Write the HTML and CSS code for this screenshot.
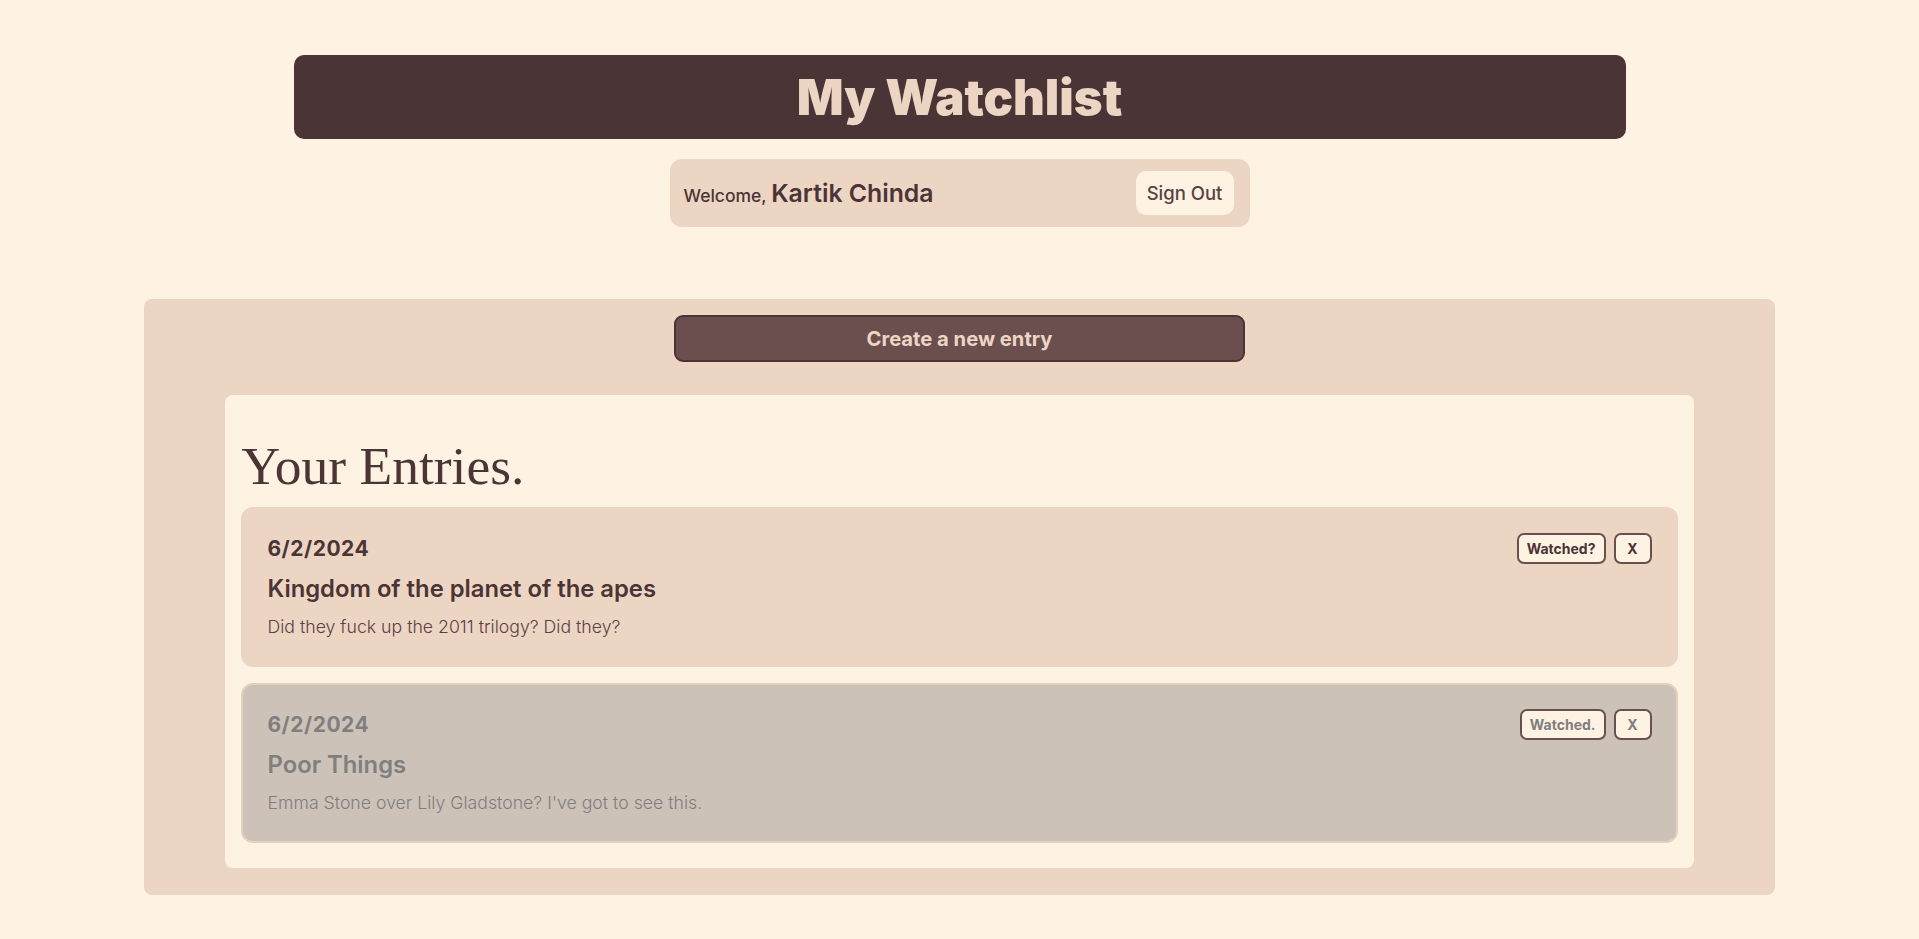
FILE: index.html
```html
<!DOCTYPE html>
<html lang="en">
<head>
<meta charset="utf-8">
<title>My Watchlist</title>
<link rel="stylesheet" href="styles.css">
</head>
<body>
  <header class="top">
    <div class="title-bar"><h1 class="title">My Watchlist</h1></div>
    <div class="welcome-bar">
      <p class="welcome"><span class="welcome-label">Welcome,</span> <span class="welcome-name">Kartik Chinda</span></p>
      <button class="sign-out">Sign Out</button>
    </div>
  </header>
  <main class="panel">
    <button class="create-btn">Create a new entry</button>
    <section class="entries">
      <h2 class="entries-heading">Your Entries.</h2>
      <div class="entry-list">
        <article class="entry">
          <div class="entry-row">
            <span class="entry-date">6/2/2024</span>
            <div class="entry-actions">
              <button class="pill">Watched?</button>
              <button class="pill pill-x">X</button>
            </div>
          </div>
          <h3 class="entry-title">Kingdom of the planet of the apes</h3>
          <p class="entry-desc">Did they fuck up the 2011 trilogy? Did they?</p>
        </article>
        <article class="entry entry-watched">
          <div class="entry-row">
            <span class="entry-date">6/2/2024</span>
            <div class="entry-actions">
              <button class="pill">Watched.</button>
              <button class="pill pill-x">X</button>
            </div>
          </div>
          <h3 class="entry-title">Poor Things</h3>
          <p class="entry-desc">Emma Stone over Lily Gladstone? I've got to see this.</p>
        </article>
      </div>
    </section>
  </main>
</body>
</html>
```
FILE: styles.css
```css
* { box-sizing: border-box; }

html, body {
  margin: 0;
  padding: 0;
}

body {
  background: #fef2e3;
  font-family: Inter, "Noto Sans", sans-serif;
  color: #4a3435;
  padding: 55px 0 40px;
}

.top {
  display: flex;
  flex-direction: column;
  align-items: center;
}

.title-bar {
  width: 1332px;
  height: 84px;
  background: #4a3435;
  border-radius: 10px;
  display: flex;
  align-items: center;
  justify-content: center;
}

.title {
  margin: 0;
  font-family: Inter, sans-serif;
  font-weight: 900;
  font-size: 49px;
  line-height: 1;
  color: #edd5c4;
}

.welcome-bar {
  margin-top: 20px;
  width: 580px;
  height: 68px;
  background: #edd5c4;
  border-radius: 12px;
  padding: 12px 16px 12px 14px;
  display: flex;
  align-items: center;
  justify-content: space-between;
}

.welcome {
  margin: 0;
  color: #4a3435;
}

.welcome-label {
  font-size: 17.5px;
  font-weight: 500;
}

.welcome-name {
  font-size: 24.8px;
  font-weight: 600;
}

.sign-out {
  width: 98px;
  height: 44px;
  border: none;
  border-radius: 10px;
  background: #fef2e3;
  color: #5a4142;
  font-family: Inter, sans-serif;
  font-size: 18.5px;
  font-weight: 500;
  padding: 0;
}

.panel {
  width: 85vw;
  margin: 72px auto 0;
  background: #edd5c4;
  border-radius: 8px;
  padding: 16px 0 27px;
}

.create-btn {
  display: block;
  width: 35%;
  height: 47px;
  margin: 0 auto;
  background: #6b4f4f;
  border: 2px solid #4a3435;
  border-radius: 9px;
  color: #edd5c4;
  font-family: Inter, sans-serif;
  font-weight: 700;
  font-size: 20.2px;
}

.entries {
  width: 90%;
  margin: 33px auto 0;
  background: #fef2e3;
  border-radius: 8px;
  padding: 40px 16px 25px;
}

.entries-heading {
  margin: 0 0 10px 0;
  font-family: "Liberation Serif", "DejaVu Serif", serif;
  font-weight: 400;
  font-size: 53.5px;
  line-height: 62px;
  color: #4a3435;
}

.entry-list {
  display: flex;
  flex-direction: column;
  gap: 16px;
}

.entry {
  background: #edd5c4;
  border-radius: 12px;
  padding: 26px 26px 28px 26px;
}

.entry-row {
  display: flex;
  align-items: center;
  justify-content: space-between;
  height: 31px;
}

.entry-date {
  font-size: 21px;
  font-weight: 700;
  letter-spacing: 0.5px;
}

.entry-actions {
  display: flex;
  gap: 8px;
}

.pill {
  height: 31px;
  padding: 0 8px;
  border: 2px solid #6b4f4f;
  border-radius: 7px;
  background: #fef2e3;
  color: #4a3435;
  font-family: Inter, sans-serif;
  font-weight: 700;
  font-size: 14px;
}

.pill-x {
  width: 38px;
}

.entry-title {
  margin: 12px 0 0;
  font-size: 23.8px;
  font-weight: 600;
  line-height: 26px;
}

.entry-desc {
  margin: 13px 0 0;
  font-size: 17.7px;
  font-weight: 300;
  line-height: 24px;
  color: #5a4142;
}

.entry-watched {
  background: #cdc2b8;
  border: 2px solid #e6cfbf;
  padding: 24px 24px 26px 24px;
}

.entry-watched .entry-date,
.entry-watched .entry-title,
.entry-watched .entry-desc,
.entry-watched .pill {
  color: #7f7f7f;
}
```
